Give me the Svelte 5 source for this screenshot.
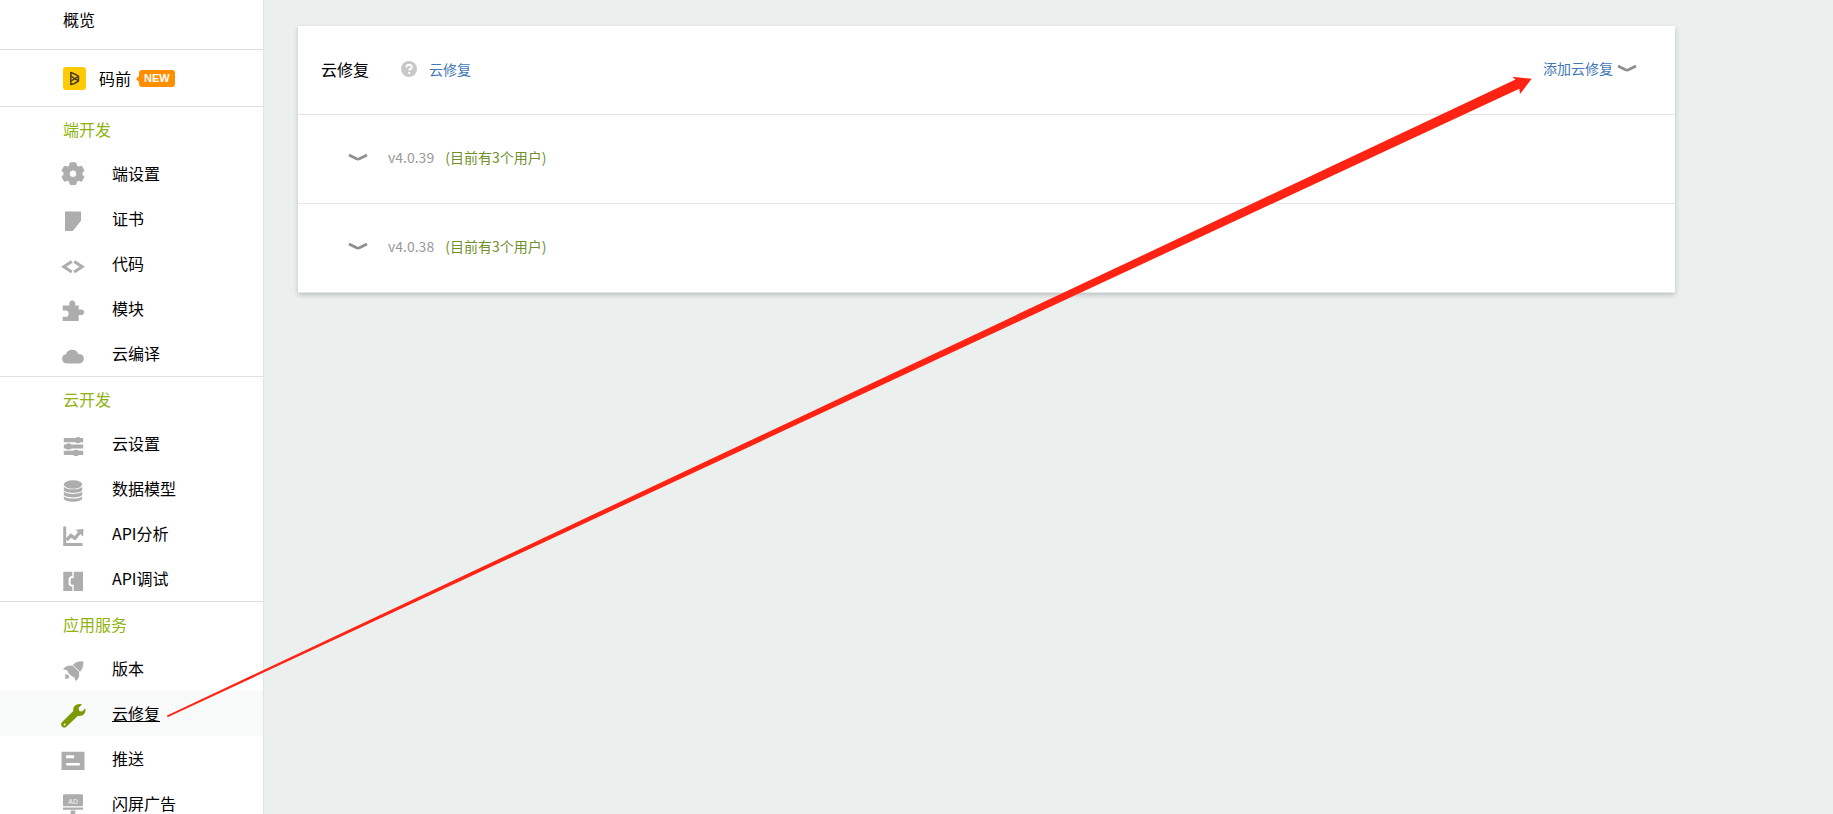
<script>
  const groups = [
    { title: '端开发', items: [['gear', '端设置'], ['cert', '证书'], ['code', '代码'], ['puzzle', '模块'], ['cloud', '云编译']] },
    { title: '云开发', items: [['sliders', '云设置'], ['database', '数据模型'], ['chart', 'API分析'], ['debug', 'API调试']] },
    { title: '应用服务', items: [['rocket', '版本'], ['wrench', '云修复'], ['push', '推送'], ['ad', '闪屏广告']] }
  ];
  const active = 'wrench';
  const versions = ['v4.0.39', 'v4.0.38'];
  let open = $state({});
</script>

{#snippet icon(name)}
  <svg class="icon" viewBox="0 0 24 25" aria-hidden="true">
    {#if name === 'gear'}
      <path fill-rule="evenodd" stroke="#adadad" stroke-linejoin="round" d="M9.300 1.800h5.400l.9 3.200 1.800 1 3.200-.8 2.400 4.400-2 2.200v1.800l2 2.200-2.400 4.400-3.200-.8-1.800 1-.9 3.200H9.300l-.9-3.200-1.800-1-3.200.8L1 15.800l2-2.200v-1.800L1 9.600l2.400-4.400 3.200.8 1.800-1zM12 8.900a3.800 3.800 0 1 0 0 7.600 3.800 3.800 0 0 0 0-7.600z" />
    {:else if name === 'cert'}
      <path d="M4 5.500h16v9.300L11.800 25H4z" />
    {:else if name === 'code'}
      <path class="line" stroke-width="3" d="M10.800 10.500 2.800 15.800l8 5.200M13.200 10.500l8 5.300-8 5.200" />
    {:else if name === 'puzzle'}
      <path d="M1.700 9.500h6.600V8a3 3 0 1 1 5.900 0v1.500h3.500v4h1.800a2.900 2.900 0 1 1 0 5.600h-1.800V25h-16v-4.200h2.700a2.900 2.900 0 1 0 0-6.300H1.700z" />
    {:else if name === 'cloud'}
      <path d="M5.500 22.500A4.700 4.700 0 0 1 5 13.200a6.500 6.500 0 0 1 12.300-.2 4.800 4.800 0 0 1 1.500 9.500z" />
    {:else if name === 'sliders'}
      <path d="M2.800 7h19.400v4.200H2.800zM2.800 13.400h19.400v4.200H2.800zM2.800 19.800h19.400V24H2.800z" />
      <circle cx="17" cy="9.100" r="3.200" /><circle cx="7.500" cy="15.500" r="3.200" /><circle cx="15" cy="21.900" r="3.200" />
    {:else if name === 'database'}
      <ellipse cx="12" cy="8.500" rx="9.200" ry="4.200" />
      <path d="M2.800 10.500c2.500 3.800 15.900 3.800 18.400 0v4c-2.500 3.200-15.900 3.200-18.400 0zM2.800 15.600c2.500 3.200 15.900 3.200 18.400 0v3.500c-2.500 3.200-15.900 3.200-18.400 0zM2.800 20.200c2.500 3.200 15.900 3.200 18.400 0v2.500c-1.500 4-16.900 4-18.400 0z" />
    {:else if name === 'chart'}
      <path class="line" stroke-width="3" d="M3.700 5.500v18H21.500" />
      <path class="line" stroke-width="3.400" d="m5.500 19 4.500-4.500 4 2.800 5-6.300" />
      <path d="m14.500 8.800 8-.8-.5 7.500z" />
    {:else if name === 'debug'}
      <path d="M2.300 5.800h9v4.500H9.400L7.600 12.500v6l1.800 2h1.900V25h-9zM12.700 5.800H22V25h-9.300v-6.200h-2.300l-.8-1v-4.600l.8-1h2.300z" />
    {:else if name === 'rocket'}
      <path d="M22.300 5.200C17 5 13.500 6.300 11.500 9.500 6.500 9 4 10.500 2 13.300l4.500 1.200.5 2 4 4 2.300.5 1 4c3.200-1.700 4.400-4.500 3.700-8.300 3.300-2.700 4.600-6.200 4.300-11.500zM4.500 18 4 22.800l4.300-.5-.8-3.300z" />
      <path class="seam" d="m11.300 8.800 7.500 7.200" />
    {:else if name === 'wrench'}
      <path fill-rule="evenodd" d="M21 3.300 17.600 7l.7 3 2.800.5 3.200-3.300c1.200 5.300-3 8.600-7.300 7.500L5.700 25.600A3.200 3.200 0 0 1 1.100 21.100L12.300 10C11.500 5.300 15.800 1.800 21 3.300zM3.600 22.500a1 1 0 1 0 0 2 1 1 0 0 0 0-2z" />
    {:else if name === 'push'}
      <path fill-rule="evenodd" d="M.5 5.700h23V24H.5zM5.200 9.300v3h8v-3zM5.200 17v2.400h13.600V17z" />
    {:else}
      <rect x="2" y="3.300" width="20" height="11.900" rx="1" />
      <path d="M2 16.500h20v2.200H2zM9.700 19.500h4.600V26H9.700z" />
      <text x="7" y="12.500">AD</text>
    {/if}
  </svg>
{/snippet}

{#snippet chevron()}
  <svg class="chevron" viewBox="0 0 20 10" aria-hidden="true"><path d="M1 2 8.500 5.800Q10 6.400 11.500 5.800L19 2" /></svg>
{/snippet}

<div class="page">
  <nav class="sidebar">
    <a class="overview" href="#overview">概览</a>
    <a class="maqian" href="#maqian">
      <svg class="logo" viewBox="0 0 23 23" aria-hidden="true">
        <rect width="23" height="23" rx="3" />
        <path d="M7.800 5.500v12l3.700-1 4-2.500V9.200L11.500 7zM7.800 8.500l3.700 3.200 4-2M7.800 14.500l3.700-2.800 4 1.800" />
      </svg>
      <span>码前</span>
      <span class="badge">NEW</span>
    </a>
    {#each groups as group}
      <section class="group">
        <h2>{group.title}</h2>
        {#each group.items as [name, label]}
          <a class="item" class:active={name === active} href="#{name}">
            {@render icon(name)}
            <span>{label}</span>
          </a>
        {/each}
      </section>
    {/each}
  </nav>

  <main>
    <section class="card">
      <header class="row head">
        <h1>云修复</h1>
        <svg class="help" viewBox="0 0 16 16" aria-hidden="true">
          <circle cx="8" cy="8" r="8" />
          <path d="M5.500 6.300c0-3.400 5.200-3.300 5.200-.3 0 1.900-2.500 1.900-2.500 3.800M8.200 11v2" />
        </svg>
        <a class="doc" href="#help">云修复</a>
        <button class="add"><span>添加云修复</span>{@render chevron()}</button>
      </header>
      {#each versions as v}
        <button class="row version" aria-expanded={!!open[v]} onclick={() => (open[v] = !open[v])}>
          {@render chevron()}
          <span class="number">{v}</span>
          <span class="users">(目前有3个用户)</span>
        </button>
      {/each}
    </section>
  </main>

  <svg class="arrow" viewBox="0 0 1833 814" aria-hidden="true">
    <path d="M167 715.500 1515.500 79.500l-3.200-2.700 19.400 1.900L1520 94l-.7-5.300L167.500 717.300z" />
  </svg>
</div>

<style>
  :global(body) { margin: 0; }
  .page {
    position: relative;
    display: grid;
    grid-template-columns: 264px 1fr;
    height: 100vh;
    overflow: hidden;
    background: #ebefee;
    color: #000;
    font: 16px/24px "Noto Sans CJK SC", sans-serif;
  }
  a { color: inherit; text-decoration: none; }
  button { border: 0; padding: 0; background: none; font: inherit; cursor: pointer; }
  h1, h2 { margin: 0; font-size: 16px; font-weight: 400; }

  .sidebar { overflow: hidden; background: #fff; border-right: 1px solid #e0e3e2; }
  .overview { display: block; padding: 7px 0 18px 63px; border-bottom: 1px solid #dfdfdf; }
  .maqian { display: flex; align-items: center; height: 56px; padding-left: 63px; border-bottom: 1px solid #dfdfdf; }
  .logo { width: 23px; height: 23px; margin-right: 13px; }
  .logo rect { fill: #ffcb00; }
  .logo path { fill: none; stroke: #4a4021; stroke-width: 1.500; stroke-linejoin: round; }
  .badge {
    position: relative;
    margin-left: 8px;
    padding: 0 5px;
    border-radius: 3px;
    background: #ff8f00;
    color: #fff;
    font: bold 11px/17px "Liberation Sans", Arial, sans-serif;
  }
  .badge::before {
    content: "";
    position: absolute;
    left: -3px;
    top: 5px;
    border: solid transparent;
    border-width: 4px 4px 4px 0;
    border-right-color: #ff8f00;
  }
  .group { border-bottom: 1px solid #dfdfdf; }
  .group h2 { padding-left: 63px; color: #8fb412; line-height: 44px; }
  .item { display: flex; align-items: center; gap: 27px; height: 45px; padding-left: 61px; }
  .item span, .add span, .number, .users { padding-bottom: 2px; }
  .active { background: #f8faf9; }
  .active span { text-decoration: underline; }
  .icon { width: 24px; height: 25px; overflow: visible; fill: #adadad; }
  .icon .line { fill: none; stroke: #adadad; }
  .icon .seam { fill: none; stroke: #fff; stroke-width: 1; }
  .icon text { fill: #e4e4e4; font: bold 7px "Liberation Sans", Arial, sans-serif; }
  .active .icon { fill: #7c9a05; }

  main { padding: 26px 158px 0 34px; }
  .card { background: #fff; box-shadow: 0 2px 5px rgba(0, 0, 0, 0.2); }
  .row { display: flex; align-items: center; box-sizing: border-box; width: 100%; height: 89px; padding-bottom: 2px; border-bottom: 1px solid #e6e6e6; font-size: 14px; }
  .head { padding-left: 23px; padding-right: 38px; }
  .help { width: 16px; height: 16px; margin: 0 12px 0 32px; fill: #c8c8c8; }
  .help path { fill: none; stroke: #fff; stroke-width: 2; }
  .doc, .add { color: #4477b5; }
  .add { display: flex; align-items: center; gap: 4px; margin-left: auto; }
  .chevron { width: 20px; height: 10px; fill: none; stroke: #8f8f8f; stroke-width: 2.800; }
  .version { padding-left: 50px; }
  .number { margin-left: 20px; color: #999; }
  .users { margin-left: 11px; color: #71902c; }
  .arrow { position: absolute; top: 0; left: 0; width: 100%; fill: #ff2314; pointer-events: none; }
</style>
